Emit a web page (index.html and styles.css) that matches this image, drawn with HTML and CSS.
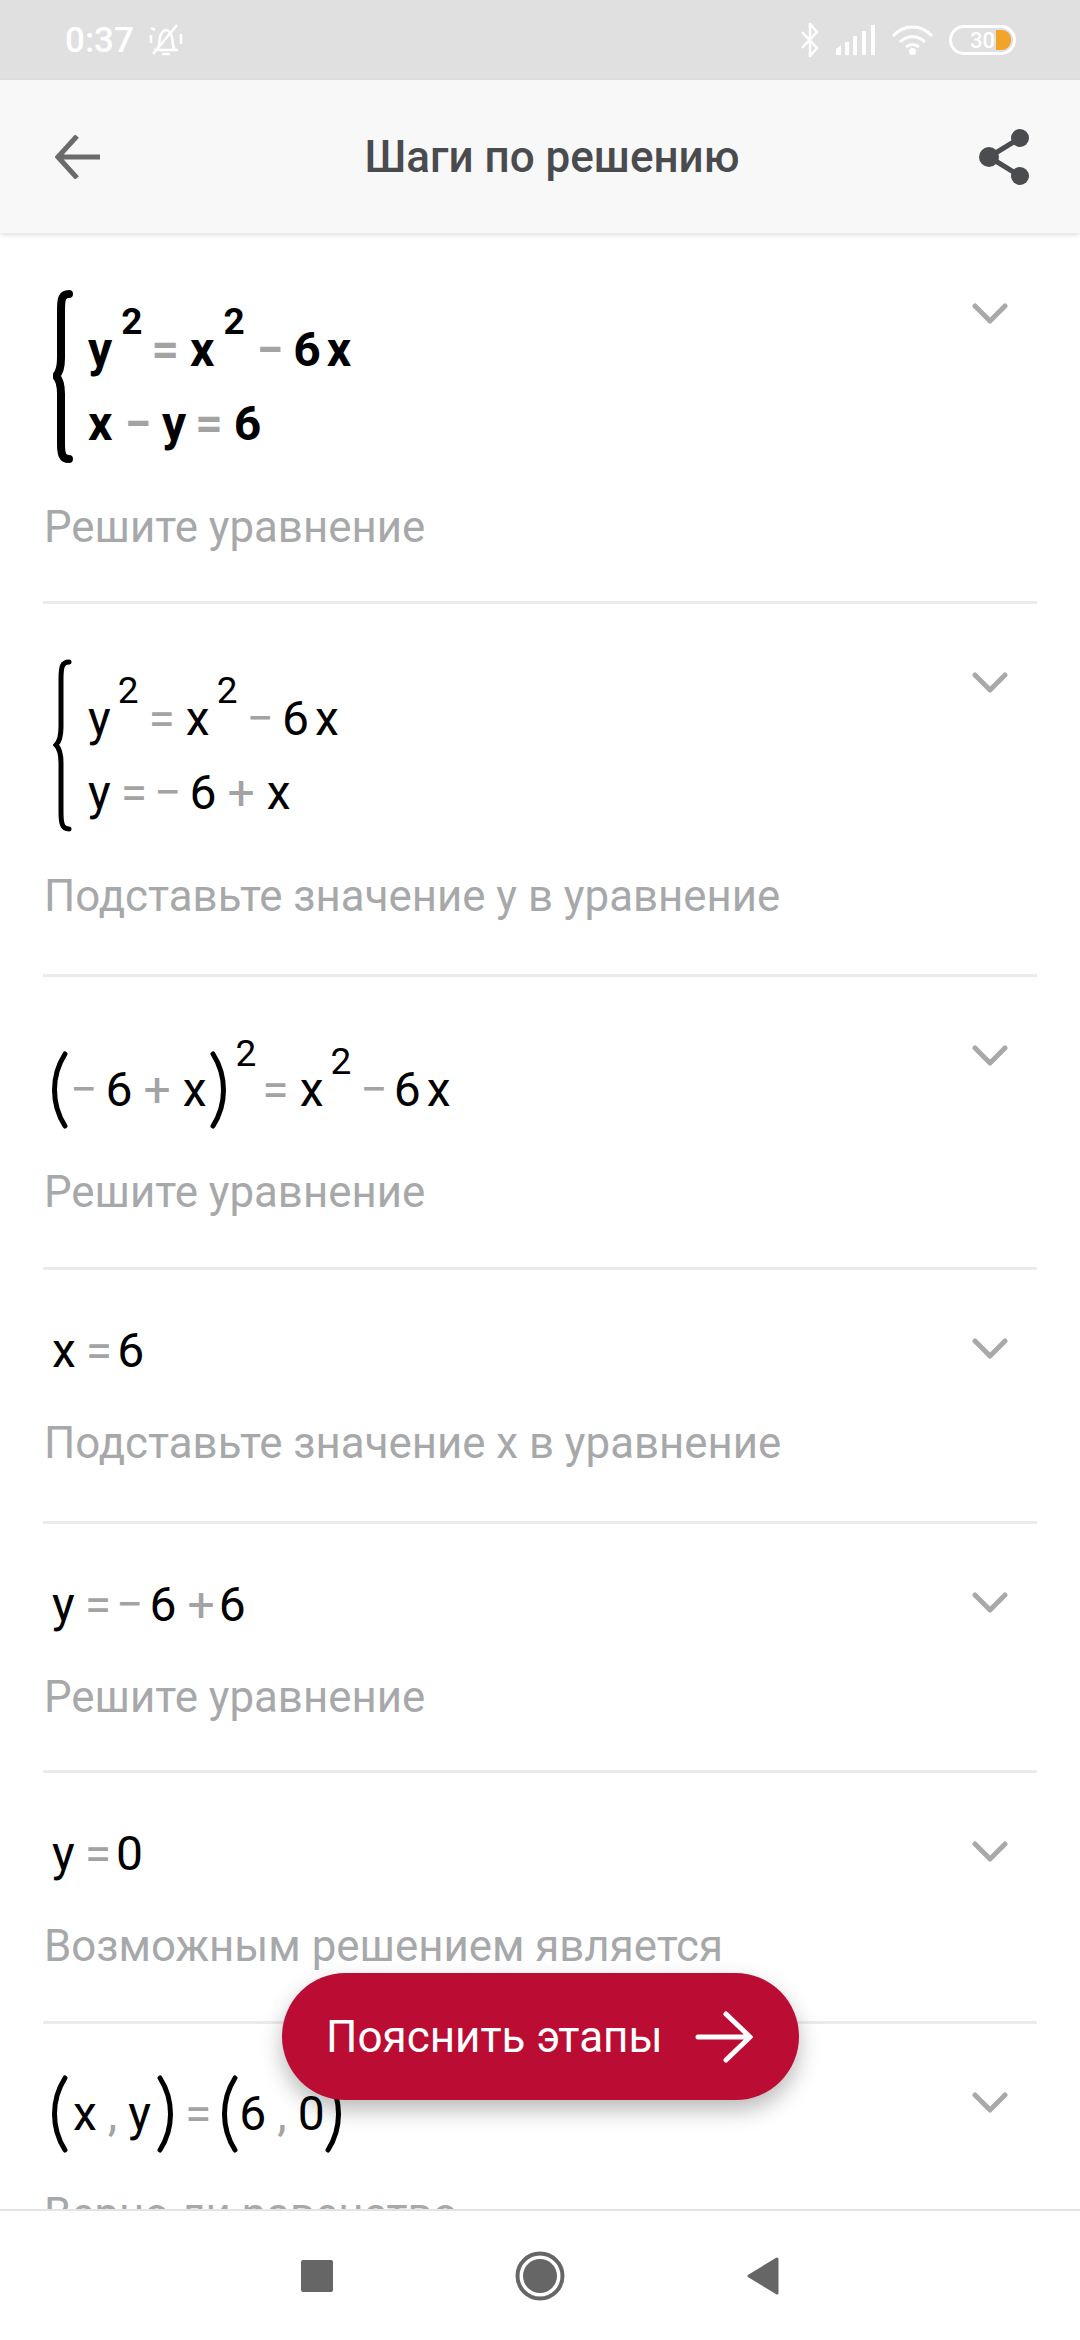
FILE: index.html
```html
<!DOCTYPE html>
<html lang="ru">
  <head>
    <meta charset="UTF-8" />
    <meta name="viewport" content="width=device-width, initial-scale=1.0" />
    <title>Шаги по решению</title>
    <link rel="stylesheet" href="styles.css">
  </head>
  <body>
    <div class="status-bar">
      <div class="status-left">
        <span class="clock">0:37</span>
        <svg class="bell" viewBox="0 0 36 34" width="36" height="34" fill="none" stroke="#fff" stroke-width="2.5">
          <path d="M6 27h24M9 27c3-4 2-8 3-13 1-4 4-7 6-7s5 3 6 7c1 5 0 9 3 13" />
          <path d="M14 31h8M3 5l4 2M5 31L29 2M33 11v10M3 12v8" />
        </svg>
      </div>
      <div class="status-right">
        <svg viewBox="0 0 22 34" width="22" height="34" fill="none" stroke="#fff" stroke-width="2.5">
          <path d="M3 9l15 16-7 8V1l7 8L3 25" />
        </svg>
        <svg viewBox="0 0 40 30" width="40" height="30" fill="#fff">
          <path d="M0 24l5-4v10H0zM9 17h4v13H9zM17 11h4v19h-4zM26 6h4v24h-4zM35 0h4v30h-4z" />
        </svg>
        <svg viewBox="0 0 43 30" width="43" height="30" fill="none" stroke="#fff" stroke-width="3">
          <path d="M2 11c11-12 28-12 39 0M9 17c7-7 18-7 25 0M15 22c4-3 9-3 13 0" />
          <circle cx="21.5" cy="26.5" r="3.5" fill="#fff" stroke="none" />
        </svg>
        <div class="battery">
          <span class="battery-num">30</span>
          <span class="battery-fill"></span>
        </div>
      </div>
    </div>

    <header class="app-bar">
      <svg class="back" viewBox="0 0 45 44" width="45" height="44" fill="none" stroke="#6b6b6b" stroke-width="5">
        <path d="M45 22H5M22 1L3 22l19 21" />
      </svg>
      <h1 class="title">Шаги по решению</h1>
      <svg class="share" viewBox="0 0 50 56" width="50" height="56" fill="#4a4c50" stroke="#4a4c50">
        <path d="M41 9L10 28l31 19" fill="none" stroke-width="5" />
        <circle cx="41" cy="9" r="9" stroke="none" />
        <circle cx="10" cy="28" r="10" stroke="none" />
        <circle cx="41" cy="47" r="9" stroke="none" />
      </svg>
    </header>

    <main class="content">
      <section class="step step-first">
        <div class="step-body">
          <div class="system bold">
            <svg class="brace" viewBox="0 0 20 173" width="20" height="173" fill="none" stroke="#000" stroke-width="8" stroke-linecap="round">
              <path d="M16 4C9 4 8 9 8 20v48c0 11-2 15-5 18 3 3 5 7 5 18v49c0 11 1 16 8 16" />
            </svg>
            <div class="lines">
              <div class="line">y<sup>2</sup><span class="eq">=</span>x<sup>2</sup><span class="minus">−</span>6<span class="gap">x</span></div>
              <div class="line">x<span class="minus wide">−</span>y<span class="eq">=</span>6</div>
            </div>
          </div>
          <p class="caption">Решите уравнение</p>
        </div>
        <svg class="chevron" viewBox="0 0 36 22" width="36" height="22" fill="none" stroke="#a9a9a9" stroke-width="5" stroke-linecap="round" stroke-linejoin="round"><path d="M3 3l15 15L33 3" /></svg>
      </section>

      <section class="step step-system">
        <div class="step-body">
          <div class="system">
            <svg class="brace" viewBox="0 0 20 173" width="20" height="173" fill="none" stroke="#000" stroke-width="5" stroke-linecap="round">
              <path d="M16 3C9 3 8 8 8 20v48c0 11-2 15-5 18 3 3 5 7 5 18v49c0 11 1 17 8 17" />
            </svg>
            <div class="lines">
              <div class="line">y<sup>2</sup><span class="eq">=</span>x<sup>2</sup><span class="minus">−</span>6<span class="gap">x</span></div>
              <div class="line">y<span class="eq short">=</span><span class="minus short">−</span>6<span class="plus">+</span>x</div>
            </div>
          </div>
          <p class="caption">Подставьте значение y в уравнение</p>
        </div>
        <svg class="chevron" viewBox="0 0 36 22" width="36" height="22" fill="none" stroke="#a9a9a9" stroke-width="5" stroke-linecap="round" stroke-linejoin="round"><path d="M3 3l15 15L33 3" /></svg>
      </section>

      <section class="step step-paren">
        <div class="step-body">
          <div class="math math-paren">
            <div class="line"><svg class="paren" viewBox="0 0 18 78" width="18" height="78" fill="none" stroke="#000" stroke-width="5" stroke-linecap="round"><path d="M15 3C1 25 1 53 15 75" /></svg><span class="minus first">−</span>6<span class="plus">+</span>x<svg class="paren paren-close" viewBox="0 0 18 78" width="18" height="78" fill="none" stroke="#000" stroke-width="5" stroke-linecap="round"><path d="M3 3c14 22 14 50 0 72" /></svg><sup class="sup-high">2</sup><span class="eq">=</span>x<sup>2</sup><span class="minus">−</span>6<span class="gap">x</span></div>
          </div>
          <p class="caption">Решите уравнение</p>
        </div>
        <svg class="chevron" viewBox="0 0 36 22" width="36" height="22" fill="none" stroke="#a9a9a9" stroke-width="5" stroke-linecap="round" stroke-linejoin="round"><path d="M3 3l15 15L33 3" /></svg>
      </section>

      <section class="step step-tall">
        <div class="step-body">
          <div class="math"><div class="line">x<span class="eq short">=</span>6</div></div>
          <p class="caption">Подставьте значение x в уравнение</p>
        </div>
        <svg class="chevron" viewBox="0 0 36 22" width="36" height="22" fill="none" stroke="#a9a9a9" stroke-width="5" stroke-linecap="round" stroke-linejoin="round"><path d="M3 3l15 15L33 3" /></svg>
      </section>

      <section class="step step-short">
        <div class="step-body">
          <div class="math"><div class="line">y<span class="eq short">=</span><span class="minus short">−</span>6<span class="plus short">+</span>6</div></div>
          <p class="caption">Решите уравнение</p>
        </div>
        <svg class="chevron" viewBox="0 0 36 22" width="36" height="22" fill="none" stroke="#a9a9a9" stroke-width="5" stroke-linecap="round" stroke-linejoin="round"><path d="M3 3l15 15L33 3" /></svg>
      </section>

      <section class="step">
        <div class="step-body">
          <div class="math"><div class="line">y<span class="eq short">=</span>0</div></div>
          <p class="caption">Возможным решением является</p>
        </div>
        <svg class="chevron" viewBox="0 0 36 22" width="36" height="22" fill="none" stroke="#a9a9a9" stroke-width="5" stroke-linecap="round" stroke-linejoin="round"><path d="M3 3l15 15L33 3" /></svg>
      </section>

      <section class="step step-pair">
        <div class="step-body">
          <div class="math math-paren">
            <div class="line"><svg class="paren" viewBox="0 0 18 78" width="18" height="78" fill="none" stroke="#000" stroke-width="5" stroke-linecap="round"><path d="M15 3C1 25 1 53 15 75" /></svg><span class="tok-first">x</span><span class="comma">,</span>y<svg class="paren paren-close" viewBox="0 0 18 78" width="18" height="78" fill="none" stroke="#000" stroke-width="5" stroke-linecap="round"><path d="M3 3c14 22 14 50 0 72" /></svg><span class="eq short">=</span><svg class="paren paren-open" viewBox="0 0 18 78" width="18" height="78" fill="none" stroke="#000" stroke-width="5" stroke-linecap="round"><path d="M15 3C1 25 1 53 15 75" /></svg>6<span class="comma">,</span>0<svg class="paren" viewBox="0 0 18 78" width="18" height="78" fill="none" stroke="#000" stroke-width="5" stroke-linecap="round"><path d="M3 3c14 22 14 50 0 72" /></svg></div>
          </div>
          <p class="caption">Верно ли равенство</p>
        </div>
        <svg class="chevron" viewBox="0 0 36 22" width="36" height="22" fill="none" stroke="#a9a9a9" stroke-width="5" stroke-linecap="round" stroke-linejoin="round"><path d="M3 3l15 15L33 3" /></svg>
      </section>

      <button class="explain" type="button">
        <span>Пояснить этапы</span>
        <svg viewBox="0 0 58 52" width="58" height="52" fill="none" stroke="#fff" stroke-width="5" stroke-linecap="round">
          <path d="M3 26h50M31 3l24 23-24 23" />
        </svg>
      </button>
    </main>

    <nav class="nav-bar">
      <span class="nav-square"></span>
      <svg viewBox="0 0 50 50" width="50" height="50" fill="#666" stroke="none">
        <circle cx="25" cy="25" r="22.5" fill="none" stroke="#666" stroke-width="4" />
        <circle cx="25" cy="25" r="17" />
      </svg>
      <svg viewBox="0 0 32 38" width="32" height="38" fill="#666" stroke="#666" stroke-width="3" stroke-linejoin="round">
        <path d="M30 2v34L2 19z" />
      </svg>
    </nav>
  </body>
</html>
```

FILE: styles.css
```css
* {
  box-sizing: border-box;
}
html, body {
  margin: 0;
  height: 100%;
}
body {
  display: flex;
  flex-direction: column;
  height: 2340px;
  overflow: hidden;
  font-family: Roboto, "Noto Sans", sans-serif;
  background-color: #fff;
  color: #000;
}

/* status bar */
.status-bar {
  flex: none;
  height: 80px;
  padding: 0 64px 0 65px;
  display: flex;
  justify-content: space-between;
  align-items: center;
  background-color: #e0e0e0;
}
.status-left, .status-right {
  display: flex;
  align-items: center;
}
.clock {
  color: #fff;
  font-size: 35px;
  font-weight: 500;
}
.bell {
  margin-left: 14px;
}
.status-right {
  gap: 15px;
}
.battery {
  width: 67px;
  height: 30px;
  border: 3px solid #fff;
  border-radius: 15px;
  display: flex;
  align-items: center;
  justify-content: flex-end;
  padding-right: 2px;
  color: #fff;
}
.battery-num {
  font-size: 22px;
  font-weight: 500;
  margin-right: 1px;
}
.battery-fill {
  width: 15px;
  height: 20px;
  background-color: #f0a42c;
  border-radius: 0 9px 9px 0;
}

/* top bar */
.app-bar {
  flex: none;
  position: relative;
  z-index: 1;
  height: 153px;
  padding: 0 51px 0 55px;
  display: flex;
  justify-content: space-between;
  align-items: center;
  background-color: #f8f8f8;
  box-shadow: 0 2px 5px rgba(0, 0, 0, 0.12);
}
.title {
  margin: 0 0 0 25px;
  font-size: 44px;
  font-weight: 500;
  color: #4a4b4f;
}

/* steps */
.content {
  flex: 1;
  min-height: 0;
  position: relative;
  overflow: hidden;
}
.step {
  margin: 0 43px;
  display: flex;
  justify-content: space-between;
  align-items: flex-start;
  border-bottom: 3px solid #ebebeb;
}
.step-body {
  flex: 1;
  min-width: 0;
  padding: 44px 0 50px;
}
.step-first .step-body {
  padding: 57px 0 49px;
}
.step-system .step-body {
  padding: 55px 0 53px;
}
.step-paren .step-body {
  padding: 73px 0 50px;
}
.step-tall .step-body {
  padding-bottom: 53px;
}
.step-short .step-body {
  padding-bottom: 48px;
}
.step-pair .step-body {
  padding: 50px 0 50px;
}
.chevron {
  flex: none;
  margin: 68px 29px 0 0;
}
.step-first .chevron {
  margin-top: 70px;
}
.system {
  display: flex;
  align-items: flex-start;
  margin-left: 10px;
}
.brace {
  flex: none;
  margin-right: 15px;
}
.lines {
  margin-top: 23px;
}
.math {
  margin-left: 9px;
}
.math-paren {
  margin-left: 7px;
}
.line {
  height: 74px;
  line-height: 74px;
  font-size: 48px;
  white-space: nowrap;
}
.bold .line {
  font-weight: 700;
}
.line sup {
  font-size: 37px;
  line-height: 0;
  vertical-align: 32px;
  margin-left: 7px;
}
.bold .line sup {
  margin-left: 9px;
}
.line .sup-high {
  vertical-align: 40px;
}
.eq, .minus, .plus, .comma {
  color: #a3a3a3;
}
.eq {
  margin: 0 11px 0 10px;
}
.bold .eq {
  margin-left: 9px;
}
.eq.short {
  margin-right: 7px;
}
.math .eq.short {
  margin-right: 5px;
}
.step-pair .eq.short {
  margin-right: 9px;
}
.step-paren .eq {
  margin-left: 6px;
}
.minus {
  margin: 0 8px 0 9px;
}
.bold .minus {
  margin: 0 10px 0 12px;
}
.step-paren .minus {
  margin-right: 6px;
}
.minus.short {
  margin-left: 0;
}
.math .minus.short {
  margin-right: 6px;
}
.minus.first {
  margin: 0 8px 0 2px;
}
.bold .minus.wide {
  margin: 0 11px 0 12px;
}
.plus {
  margin: 0 12px 0 11px;
}
.plus.short {
  margin-right: 4px;
}
.gap {
  margin-left: 6px;
}
.tok-first {
  margin-left: 5px;
}
.comma {
  margin: 0 11px;
}
.paren {
  vertical-align: -23px;
}
.paren-close {
  margin-left: 4px;
}
.step-pair .paren-close {
  margin-left: 6px;
}
.paren-open {
  margin-right: 1px;
}
.math-paren .line {
  height: 80px;
  line-height: 80px;
}
.caption {
  margin: 30px 0 0 1px;
  font-size: 43.8px;
  line-height: 50px;
  color: #a7a8aa;
}
.step-first .caption, .step-system .caption {
  margin-top: 39px;
}
.step-paren .caption {
  margin-top: 37px;
}
.step-pair .caption {
  margin-top: 35px;
}

/* floating button */
.explain {
  position: absolute;
  left: 282px;
  bottom: 109px;
  width: 517px;
  height: 127px;
  padding: 0 46px 0 44px;
  display: flex;
  align-items: center;
  justify-content: space-between;
  background-color: #bb0c33;
  color: #fff;
  border: none;
  border-radius: 64px;
  font-family: inherit;
  font-size: 44px;
  box-shadow: 0 10px 22px rgba(0, 0, 0, 0.28);
}

/* bottom navigation */
.nav-bar {
  flex: none;
  height: 131px;
  display: flex;
  justify-content: center;
  align-items: center;
  gap: 182px;
  background-color: #fff;
  border-top: 2px solid #e4e4e4;
}
.nav-square {
  width: 32px;
  height: 32px;
  border-radius: 2px;
  background-color: #666;
}
```
